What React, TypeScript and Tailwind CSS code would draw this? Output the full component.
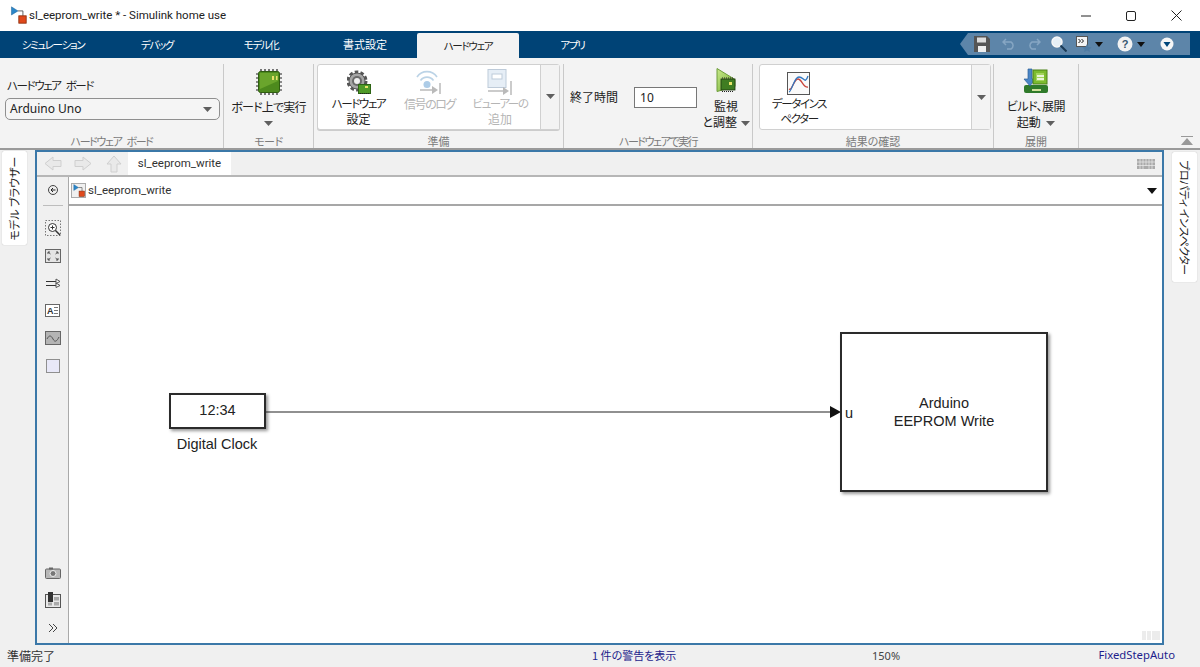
import React from "react";

const font = "font-['Noto_Sans_CJK_JP','Noto_Sans',sans-serif] [font-feature-settings:'palt']";
const kana = "text-[11.500px] tracking-[-1.400px]";
const tabKana = "text-[10.500px] tracking-[-1.300px]";

function Caret({ className = "" }: { className?: string }) {
  return (
    <svg width="9" height="5" viewBox="0 0 9 5" className={className}>
      <path d="M0 0h9L4.500 5z" fill="#5f5f5f" />
    </svg>
  );
}

function ModelIcon({ size = 22 }: { size?: number }) {
  return (
    <svg width={size} height={size} viewBox="0 0 22 22">
      <path d="M3 1v10l8-5z" fill="#2a86c8" stroke="#1b5f96" strokeWidth="0.6" />
      <path d="M11 6h6v6" fill="none" stroke="#444" strokeWidth="1" />
      <rect x="12" y="12" width="9" height="9" fill="#e0491c" stroke="#8a2a08" />
    </svg>
  );
}

function ChipIcon() {
  const pins = [4, 8, 12, 16, 20];
  return (
    <svg width="26" height="26" viewBox="0 0 26 26">
      {pins.map((p) => (
        <g key={p} stroke="#222" strokeWidth="1.2">
          <path d={`M${p + 1} 0v4M${p + 1} 22v4M0 ${p + 1}h4M22 ${p + 1}h4`} />
        </g>
      ))}
      <rect x="2.500" y="2.500" width="21" height="21" rx="2" fill="#4d8a1d" stroke="#2f5d10" />
      <path d="M4 4h18v8L4 20z" fill="#6aa52c" />
      <rect x="16" y="7" width="2" height="4" fill="#e9e36a" />
      <rect x="20" y="7" width="1.500" height="4" fill="#e9e36a" />
    </svg>
  );
}

function GearIcon() {
  return (
    <svg width="24" height="24" viewBox="0 0 24 24">
      <circle cx="10" cy="11" r="9" fill="none" stroke="#555" strokeWidth="3" strokeDasharray="3.500 2.200" />
      <circle cx="10" cy="11" r="8" fill="#a5a5a5" stroke="#555" />
      <circle cx="10" cy="11" r="5" fill="#6a6a6a" />
      <circle cx="10" cy="11" r="3" fill="#efefef" />
      <rect x="11.500" y="14.500" width="12" height="9" fill="#4f9a28" stroke="#2d6414" />
      <rect x="18" y="16" width="3" height="2" fill="#e9e36a" />
      <path d="M13 23.500h9" stroke="#222" strokeDasharray="1 1" />
    </svg>
  );
}

function SignalIcon() {
  return (
    <svg width="28" height="24" viewBox="0 0 28 24" opacity="0.5">
      <path d="M1 7a12 12 0 0 1 20 0M4.500 10.500a8 8 0 0 1 13 0" fill="none" stroke="#7aa9cf" strokeWidth="1.600" />
      <circle cx="11" cy="14.500" r="3.500" fill="#5d9ad0" />
      <path d="M4 20h14" stroke="#777" strokeWidth="1.500" />
      <path d="M16 16l6 4-6 4z" fill="#777" />
      <path d="M24 13v11" stroke="#777" strokeWidth="1.500" />
    </svg>
  );
}

function ViewerIcon() {
  return (
    <svg width="26" height="26" viewBox="0 0 26 26" opacity="0.5">
      <rect x="1" y="0.500" width="18" height="18" fill="#cfdfef" stroke="#7f99b5" />
      <rect x="5" y="5" width="10" height="5" fill="#fff" stroke="#7f99b5" />
      <path d="M1 22h17" stroke="#777" strokeWidth="1.500" />
      <path d="M16 18l6 4-6 4z" fill="#777" />
      <path d="M24 12v14" stroke="#777" strokeWidth="1.500" />
    </svg>
  );
}

function MonitorIcon() {
  return (
    <svg width="20" height="24" viewBox="0 0 20 24">
      <defs>
        <linearGradient id="mon" x1="0" y1="0" x2="1" y2="1">
          <stop offset="0" stopColor="#c8e88a" />
          <stop offset="1" stopColor="#6fae2f" />
        </linearGradient>
      </defs>
      <path d="M1 0.500l18 11v7L1 23.500z" fill="url(#mon)" stroke="#6c9c3a" />
      <rect x="5" y="11" width="14" height="11" fill="#3f7d22" stroke="#1d3510" strokeWidth="0.800" />
      <path d="M6 23.500h12M6 10h12" stroke="#222" strokeDasharray="1 1" />
      <rect x="13" y="14" width="3" height="3" fill="#e9e36a" />
    </svg>
  );
}

function InspectorIcon() {
  return (
    <svg width="24" height="24" viewBox="0 0 24 24">
      <rect x="0.500" y="0.500" width="22" height="22" fill="#fafafa" stroke="#555" />
      <path d="M2 17c3 2 5-10 9-10s5 9 10 8" fill="none" stroke="#c9443a" strokeWidth="1.300" />
      <path d="M2 20c3-1 5-15 10-15s6 8 9-1" fill="none" stroke="#2f76c0" strokeWidth="1.300" />
    </svg>
  );
}

function BuildIcon() {
  return (
    <svg width="26" height="26" viewBox="0 0 26 26">
      <rect x="1" y="17" width="24" height="8" rx="2" fill="#2f7a2a" />
      <rect x="9" y="21" width="9" height="2" fill="#cfe09a" />
      <path d="M5 1h4v10h3l-5 7-6-7h4z" fill="#4b86c6" stroke="#2b5f98" strokeWidth="0.700" />
      <rect x="10" y="2" width="14" height="14" fill="#7cbb2f" stroke="#4b8219" />
      <rect x="13" y="5" width="8" height="8" fill="#a4d45e" />
      <path d="M14 8h7M21 11h-7" stroke="#fff" strokeWidth="1.300" />
    </svg>
  );
}

function Group({
  w,
  label,
  lc = "",
  children,
}: {
  w: string;
  label: string;
  lc?: string;
  children: React.ReactNode;
}) {
  return (
    <div className={`${w} flex h-full shrink-0 flex-col border-r border-[#c9c9c9]`}>
      <div className="min-h-0 flex-1">{children}</div>
      <div className={`h-[14px] whitespace-nowrap text-center text-[11px] leading-[14px] text-[#7b7b7b] ${lc}`}>{label}</div>
    </div>
  );
}

function LargeBtn({
  icon,
  l1,
  l2,
  w,
  dim,
  tx = "",
}: {
  icon: React.ReactNode;
  l1: string;
  l2: React.ReactNode;
  w: string;
  dim?: boolean;
  tx?: string;
}) {
  return (
    <div className={`${w} flex flex-col items-center pt-[5px] text-[12px] leading-[15px] ${dim ? "text-[#b5b5b5]" : "text-[#222]"}`}>
      <div className="flex h-[24px] items-center">{icon}</div>
      <div className={`mt-[2px] whitespace-nowrap ${tx}`}>{l1}</div>
      <div className="whitespace-nowrap">{l2}</div>
    </div>
  );
}

function ToolIcon({ children, mt = "mt-[9.500px]" }: { children: React.ReactNode; mt?: string }) {
  return <div className={`flex h-[18px] w-[18px] items-center justify-center ${mt}`}>{children}</div>;
}

export default function App() {
  return (
    <div className={`${font} flex h-[667px] w-[1200px] flex-col overflow-hidden bg-[#f0f0f0] text-[#222]`}>
      {/* Title bar */}
      <div className="flex h-[31px] shrink-0 items-center bg-white">
        <div className="ml-[9px] mt-[-2px]"><ModelIcon size={18} /></div>
        <div className="ml-[2px] font-['Roboto',sans-serif] text-[11.500px] text-[#222]">sl_eeprom_write * - Simulink home use</div>
        <div className="ml-auto flex items-center">
          <svg width="10" height="2" viewBox="0 0 10 2" className="mr-[35px]"><path d="M0 1h10" stroke="#222" /></svg>
          <svg width="10" height="10" viewBox="0 0 10 10" className="mr-[35px]"><rect x="0.500" y="0.500" width="9" height="9" rx="1.500" fill="none" stroke="#222" /></svg>
          <svg width="11" height="11" viewBox="0 0 11 11" className="mr-[18px]"><path d="M0.500 0.500l10 10M10.500 0.500l-10 10" stroke="#222" /></svg>
        </div>
      </div>

      {/* Tabs */}
      <div className="flex h-[27px] shrink-0 items-stretch bg-[#004376] pl-[1px] text-[11px] text-white">
        <div className={`flex w-[104px] items-center justify-center whitespace-nowrap ${tabKana}`}>シミュレーション</div>
        <div className={`flex w-[104px] items-center justify-center whitespace-nowrap ${tabKana}`}>デバッグ</div>
        <div className={`flex w-[104px] items-center justify-center whitespace-nowrap ${tabKana}`}>モデル化</div>
        <div className="flex w-[104px] items-center justify-center whitespace-nowrap">書式設定</div>
        <div className={`mt-[2px] flex w-[102px] items-center justify-center rounded-t-[2px] bg-[#f3f3f3] text-[#222] ${tabKana}`}>ハードウェア</div>
        <div className={`flex w-[107px] items-center justify-center ${tabKana}`}>アプリ</div>
        <div className="ml-auto mr-[10px] mt-[2px] flex h-[22px] w-[230px] items-center bg-[#5d85a9] [clip-path:polygon(8px_0,100%_0,100%_100%,8px_100%,0_50%)]">
          <svg width="16" height="16" viewBox="0 0 16 16" className="ml-[14px]">
            <path d="M0 0h13l3 3v13H0z" fill="#555" />
            <rect x="3" y="1.500" width="9" height="5" fill="#ddd" />
            <rect x="4" y="10" width="8" height="6" fill="#eee" />
          </svg>
          <svg width="14" height="12" viewBox="0 0 14 12" className="ml-[12px]" fill="none" stroke="#86a6c3" strokeWidth="1.500">
            <path d="M4 1L1 4l3 3M1 4h8a4 4 0 0 1 0 7H5" />
          </svg>
          <svg width="14" height="12" viewBox="0 0 14 12" className="ml-[11px]" fill="none" stroke="#86a6c3" strokeWidth="1.500">
            <path d="M10 1l3 3-3 3M13 4H5a4 4 0 0 0 0 7h4" />
          </svg>
          <svg width="16" height="16" viewBox="0 0 16 16" className="ml-[10px]">
            <circle cx="6" cy="6" r="5" fill="#e6eff6" stroke="#f7f7f7" strokeWidth="1.500" />
            <path d="M9.500 9.500L15.500 15.500" stroke="#1a3a55" strokeWidth="2" />
          </svg>
          <svg width="16" height="16" viewBox="0 0 16 16" className="ml-[9px]">
            <rect x="0.500" y="0.500" width="11" height="10" fill="#f4f4f4" stroke="#555" />
            <path d="M2.500 3l2 2-2 2M5.500 3l2 2-2 2" fill="none" stroke="#111" />
            <path d="M11 8l1.500 3 3 .4-2.200 2 .6 2.600-2.900-1.500L8.100 16l.6-2.600-2.200-2 3-.4z" fill="#4f7ba3" />
          </svg>
          <svg width="8" height="5" viewBox="0 0 8 5" className="ml-[3px]"><path d="M0 0h8L4 5z" fill="#111" /></svg>
          <svg width="16" height="16" viewBox="0 0 16 16" className="ml-[14px]">
            <circle cx="8" cy="8" r="7.500" fill="#f2f2f2" />
            <text x="8" y="12" textAnchor="middle" fontSize="11" fontWeight="700" fill="#35566f" fontFamily="Liberation Sans">?</text>
          </svg>
          <svg width="8" height="5" viewBox="0 0 8 5" className="ml-[4px]"><path d="M0 0h8L4 5z" fill="#111" /></svg>
          <svg width="14" height="14" viewBox="0 0 14 14" className="ml-[15px]">
            <circle cx="7" cy="7" r="6.500" fill="#f6f6f6" />
            <path d="M3.500 5h7L7 10z" fill="#00467a" />
          </svg>
        </div>
      </div>

      {/* Ribbon */}
      <div className="flex h-[90px] shrink-0 bg-[#f3f3f3] pt-[6px]">
        <Group w="w-[224px]" label="ハードウェア ボード" lc="tracking-[-1.400px] [word-spacing:4px]">
          <div className="pl-[5px] pr-[3px]">
            <div className="pl-[2px] pt-[13px] text-[11.500px] leading-[16px] tracking-[-1.400px] [word-spacing:4px]">ハードウェア ボード</div>
            <div className="mt-[5px] flex h-[22px] w-[215px] items-center justify-between rounded-[5px] border border-[#8f8f8f] bg-[#f5f5f5] pl-[4px] pr-[7px] font-['Noto_Sans',sans-serif] text-[12px]">
              Arduino Uno
              <Caret />
            </div>
          </div>
        </Group>
        <Group w="w-[90px]" label="モード" lc="tracking-[-0.500px]">
          <div className="flex flex-col items-center pt-[5px] text-[12px] leading-[16px]">
            <ChipIcon />
            <div className="mt-[4px] whitespace-nowrap tracking-[-0.800px]">ボード上で実行</div>
            <Caret className="mt-[6px]" />
          </div>
        </Group>
        <Group w="w-[250px]" label="準備">
          <div className="ml-[3px] flex h-[66px] w-[243px] rounded-[3px] border border-[#d0d0d0] bg-white shadow-[0_1px_0_#ccc]">
            <LargeBtn w="w-[81px]" tx={kana} icon={<GearIcon />} l1="ハードウェア" l2="設定" />
            <LargeBtn w="w-[61px]" tx="tracking-[-1.400px]" dim icon={<SignalIcon />} l1="信号のログ" l2="" />
            <LargeBtn w="w-[80px]" tx={kana} dim icon={<ViewerIcon />} l1="ビューアーの" l2="追加" />
            <div className="flex flex-1 items-center justify-center border-l border-[#d0d0d0] bg-[#f3f3f3]">
              <Caret className="mb-[1px]" />
            </div>
          </div>
        </Group>
        <Group w="w-[189px]" label="ハードウェアで実行" lc="tracking-[-1.500px]">
          <div className="flex pl-[6px]">
            <div className="mt-[25px] whitespace-nowrap text-[12px] leading-[16px]">終了時間</div>
            <div className="ml-[16px] mt-[23px] flex h-[21px] w-[63px] items-center border border-[#777] bg-white pl-[5px] font-['Noto_Sans',sans-serif] text-[12px]">10</div>
            <div className="ml-[6px] flex w-[46px] flex-col items-center pt-[4px] text-[12px] leading-[16px]">
              <MonitorIcon />
              <div className="mt-[6px]">監視</div>
              <div className="whitespace-nowrap">と調整 <Caret className="ml-[1px] inline" /></div>
            </div>
          </div>
        </Group>
        <Group w="w-[241px]" label="結果の確認">
          <div className="ml-[6px] flex h-[66px] w-[232px] rounded-[3px] border border-[#d0d0d0] bg-white">
            <div className="flex w-[78px] flex-col items-center pt-[7px] text-[12px] leading-[15px]">
              <InspectorIcon />
              <div className={`whitespace-nowrap ${kana}`}>データインス</div>
              <div className={kana}>ペクター</div>
            </div>
            <div className="flex-1" />
            <div className="flex w-[19px] items-center justify-center border-l border-[#d0d0d0] bg-[#f3f3f3]">
              <Caret />
            </div>
          </div>
        </Group>
        <Group w="w-[85px]" label="展開">
          <div className="flex flex-col items-center pt-[4px] text-[12px] leading-[16px]">
            <BuildIcon />
            <div className="mt-[4px] whitespace-nowrap tracking-[-0.500px]">ビルド、展開</div>
            <div className="whitespace-nowrap">起動 <Caret className="ml-[3px] inline" /></div>
          </div>
        </Group>
        <div className="relative flex-1">
          <svg width="12" height="10" viewBox="0 0 12 10" className="absolute bottom-[2px] right-[7px]">
            <path d="M0 .500h12" stroke="#999" />
            <path d="M0 9h12L6 2z" fill="#999" />
          </svg>
        </div>
      </div>

      {/* Middle */}
      <div className="flex h-[497px] shrink-0 border-t-2 border-[#9a9a9a]">
        <div className="w-[35px] shrink-0 pl-[2px] pt-[1px]">
          <div className="flex h-[94px] w-[25px] items-center justify-center rounded-[2px] bg-white shadow-[0_0_1px_#aaa]">
            <span className="-rotate-90 whitespace-nowrap text-[11px] leading-[13px]">モデル ブラウザー</span>
          </div>
        </div>
        <div className="flex w-[1129px] shrink-0 flex-col border-2 border-[#3b78a8] bg-[#f0f0f0]">
          {/* tab row */}
          <div className="flex h-[25px] shrink-0 items-stretch border-b-2 border-[#b6b6b6]">
            <div className="flex w-[91px] items-center pl-[7px]">
              <svg width="18" height="15" viewBox="0 0 18 15"><path d="M17 4.500H9V1L1 7.500 9 14v-3.500h8z" fill="#e9e9e9" stroke="#cfcfcf" /></svg>
              <svg width="18" height="15" viewBox="0 0 18 15" className="ml-[12px]"><path d="M1 4.500h8V1l8 6.500L9 14v-3.500H1z" fill="#e9e9e9" stroke="#cfcfcf" /></svg>
              <svg width="16" height="18" viewBox="0 0 16 18" className="ml-[14px]"><path d="M5 17V9H1l7-8 7 8h-4v8z" fill="#e9e9e9" stroke="#cfcfcf" /></svg>
            </div>
            <div className="flex w-[103px] items-center justify-center bg-white font-['Roboto',sans-serif] text-[11.500px] text-[#333]">sl_eeprom_write</div>
            <div className="ml-auto mr-[7px] flex items-center">
              <svg width="18" height="10" viewBox="0 0 18 10">
                <rect width="18" height="10" fill="#aaa" />
                <path d="M0 3h18M0 6.500h18M3 0v10M6 0v10M9 0v7M12 0v10M15 0v10" stroke="#eee" strokeWidth="0.700" />
              </svg>
            </div>
          </div>
          <div className="flex min-h-0 flex-1">
            {/* left tools */}
            <div className="flex w-[32px] shrink-0 flex-col items-center border-r border-[#a9a9a9] pb-[10px]">
              <svg width="10" height="10" viewBox="0 0 10 10" className="mt-[8px]">
                <circle cx="5" cy="5" r="4.500" fill="#eee" stroke="#444" />
                <path d="M7.500 5H3M5 3L3 5l2 2" fill="none" stroke="#222" />
              </svg>
              <div className="mt-[10px] h-px w-[20px] bg-[#bdbdbd]" />
              <ToolIcon mt="mt-[13px]">
                <svg width="16" height="16" viewBox="0 0 16 16">
                  <rect x="0.500" y="0.500" width="15" height="15" fill="none" stroke="#777" strokeDasharray="1.500 1.500" />
                  <circle cx="7.500" cy="7.500" r="4" fill="#fff" stroke="#333" />
                  <path d="M10.500 10.500L15 15" stroke="#333" strokeWidth="1.500" />
                  <path d="M5.500 7.500h4M7.500 5.500v4" stroke="#333" />
                </svg>
              </ToolIcon>
              <ToolIcon>
                <svg width="16" height="14" viewBox="0 0 16 14">
                  <rect x="0.500" y="0.500" width="15" height="13" fill="#e4e4e4" stroke="#666" />
                  <path d="M3 3l2.500 2M3 3h2M3 3v2M13 3l-2.500 2M13 3h-2M13 3v2M3 11l2.500-2M3 11h2M3 11V9M13 11l-2.500-2M13 11h-2M13 11V9" stroke="#555" fill="none" />
                </svg>
              </ToolIcon>
              <ToolIcon>
                <svg width="16" height="11" viewBox="0 0 16 11">
                  <path d="M1 3.500h11M1 7.500h11" stroke="#333" />
                  <path d="M11 1l4 2.500-4 2zM11 5l4 2.500-4 2z" fill="#fff" stroke="#555" />
                </svg>
              </ToolIcon>
              <ToolIcon>
                <svg width="15" height="13" viewBox="0 0 15 13">
                  <rect x="0.500" y="0.500" width="14" height="12" fill="#fff" stroke="#666" />
                  <text x="2" y="10" fontSize="9" fontWeight="700" fill="#333" fontFamily="Liberation Sans">A</text>
                  <path d="M9 3.500h4M9 6.500h4M9 9.500h4" stroke="#777" />
                </svg>
              </ToolIcon>
              <ToolIcon>
                <svg width="16" height="14" viewBox="0 0 16 14">
                  <rect x="0.500" y="0.500" width="15" height="13" fill="#b4b4b4" stroke="#666" />
                  <path d="M2 8c2-4 4-4 6 0s4 2 6-2" fill="none" stroke="#555" />
                </svg>
              </ToolIcon>
              <ToolIcon>
                <div className="h-[14px] w-[14px] border border-[#8f8f8f] bg-[#e8e8f8]" />
              </ToolIcon>
              <div className="flex-1" />
              <svg width="16" height="12" viewBox="0 0 16 12">
                <rect x="0.500" y="2" width="15" height="9.500" rx="1" fill="#b7b7b7" stroke="#666" />
                <rect x="4" y="0.500" width="4" height="2" fill="#666" />
                <circle cx="8" cy="6.500" r="3" fill="#777" stroke="#eee" />
              </svg>
              <svg width="16" height="16" viewBox="0 0 16 16" className="mt-[13px]">
                <rect x="0.500" y="2.500" width="15" height="13" fill="#e8e8e8" stroke="#555" />
                <rect x="3" y="0" width="5" height="10" fill="#333" />
                <rect x="9" y="5" width="5" height="3.500" fill="#aaa" />
                <rect x="9" y="10" width="5" height="3.500" fill="#aaa" />
                <rect x="3" y="10.500" width="4" height="3" fill="#aaa" />
              </svg>
              <svg width="10" height="10" viewBox="0 0 10 10" className="mt-[15px]" fill="none" stroke="#444" strokeWidth="1">
                <path d="M1 1l4 4-4 4M5 1l4 4-4 4" />
              </svg>
            </div>
            <div className="flex min-w-0 flex-1 flex-col">
              {/* breadcrumb */}
              <div className="flex h-[29px] shrink-0 items-center border-b-2 border-[#a7a7a7] bg-white pl-[2px] pr-[5px] font-['Roboto',sans-serif] text-[11.500px] text-[#333]">
                <div className="flex h-[15px] w-[15px] items-center justify-center border border-[#aaa] bg-[#f0f0f0]"><ModelIcon size={13} /></div>
                <span className="ml-[2px]">sl_eeprom_write</span>
                <svg width="10" height="6" viewBox="0 0 10 6" className="ml-auto"><path d="M0 0h10L5 6z" fill="#111" /></svg>
              </div>
              {/* canvas */}
              <div className="relative min-h-0 flex-1 bg-white font-['Liberation_Sans',Arial,sans-serif] text-[14.500px] text-[#222]">
                <div className="absolute left-[100px] top-[187px] flex h-[36px] w-[97px] items-center justify-center border-2 border-[#2b2b2b] shadow-[2px_2px_3px_#999]">12:34</div>
                <div className="absolute left-[99px] top-[228px] w-[98px] whitespace-nowrap text-center">Digital Clock</div>
                <svg className="absolute left-[197px] top-[199px]" width="577" height="14" viewBox="0 0 577 14">
                  <path d="M0 7h565" stroke="#222" strokeWidth="1.200" />
                  <path d="M564 1l11 6-11 6z" fill="#111" />
                </svg>
                <div className="absolute left-[771px] top-[126px] flex h-[160px] w-[208px] flex-col items-center justify-center border-2 border-[#2b2b2b] text-center leading-[18px] shadow-[2px_2px_3px_#999]">
                  <div>Arduino</div>
                  <div>EEPROM Write</div>
                  <div className="absolute left-[3px] top-[70px]">u</div>
                </div>
                <div className="absolute bottom-[3px] right-[2px] flex gap-px">
                  <div className="h-[9px] w-[4px] bg-[#ececec]" />
                  <div className="h-[9px] w-[4px] bg-[#ececec]" />
                  <div className="h-[9px] w-[8px] bg-[#ececec]" />
                </div>
              </div>
            </div>
          </div>
        </div>
        <div className="ml-[8px] mt-[2px] flex h-[130px] w-[25px] shrink-0 items-center justify-center rounded-[2px] bg-white shadow-[0_0_1px_#aaa]">
          <span className="rotate-90 whitespace-nowrap text-[11px] leading-[13px] tracking-[-0.500px]">プロパティ インスペクター</span>
        </div>
      </div>

      {/* Status */}
      <div className="relative flex h-[22px] shrink-0 items-center text-[12px]">
        <div className="pl-[7px] text-[#333]">準備完了</div>
        <div className="absolute left-[592px] top-[2px] whitespace-nowrap text-[11px] text-[#1e1e8c]">1 件の警告を表示</div>
        <div className="absolute left-[872px] top-[3px] font-['Noto_Sans',sans-serif] text-[11px] text-[#444]">150%</div>
        <div className="absolute right-[25px] top-[2px] font-['Noto_Sans',sans-serif] text-[11.300px] text-[#1e1e8c]">FixedStepAuto</div>
      </div>
    </div>
  );
}
